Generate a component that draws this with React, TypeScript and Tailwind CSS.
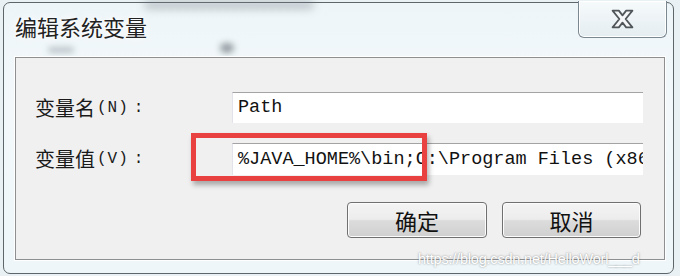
const CJK = "font-['Noto_Sans_CJK_SC','Noto_Sans',sans-serif]";
const MONO = "font-['Liberation_Mono','DejaVu_Sans_Mono',monospace]";

function CloseGlyph() {
  return (
    <svg width="23" height="20" viewBox="0 0 22 19">
      <polygon
        points="1.5,1.5 7.5,1.5 11,6 14.5,1.5 20.5,1.5 14,9.5 20.5,17.5 14.5,17.5 11,13 7.5,17.5 1.5,17.5 8,9.5"
        fill="#f4f6f7"
        stroke="#50555a"
        strokeWidth="1.7"
        strokeLinejoin="round"
      />
    </svg>
  );
}

function Label({ text, key_ }: { text: string; key_: string }) {
  return (
    <div className={`flex w-[216px] shrink-0 items-center pl-[19px] text-[20px] text-[#1a1a1a] ${CJK}`}>
      <span>{text}</span>
      <span className={`ml-[2px] text-[16px] tracking-[1px] ${MONO}`}>({key_})</span>
      <span className={`ml-[5px] text-[16px] ${MONO}`}>:</span>
    </div>
  );
}

function Field({ value }: { value: string }) {
  return (
    <div
      className={`flex h-full w-[411px] shrink-0 items-center overflow-hidden whitespace-pre border-t border-l border-t-[#a3a3a3] border-l-[#e2e3ea] bg-white pl-[5px] text-[18.5px] text-[#111] ${MONO}`}
    >
      {value}
    </div>
  );
}

function WinButton({ label }: { label: string }) {
  return (
    <button
      type="button"
      className={`flex h-full w-full items-center justify-center rounded-[4px] border border-[#707070] bg-[linear-gradient(#f4f4f4_0%,#ececec_48%,#dcdcdc_52%,#d0d0d0_100%)] text-[22px] text-[#111] shadow-[inset_0_0_0_1px_#fcfcfc] ${CJK}`}
    >
      {label}
    </button>
  );
}

export default function App() {
  return (
    <div className="h-[276px] w-[680px] overflow-hidden bg-[#e9f1f4] pl-[3px] pt-[2px]">
      <div className="relative flex h-[272px] w-[671px] flex-col rounded-[7px] border border-[#5c666b] bg-[linear-gradient(180deg,#eef5f8_0%,#f3f9fb_40%,#eef6f9_100%)]">
        {/* blurred background behind the glass */}
        <div className="pointer-events-none absolute left-[140px] top-[-2px] h-[8px] w-[170px] rounded-full bg-[#6d7780] opacity-40 blur-[4px]" />
        <div className="pointer-events-none absolute left-[216px] top-[40px] h-[10px] w-[14px] rounded-full bg-[#3f4a52] opacity-50 blur-[3px]" />
        <div className="pointer-events-none absolute left-[44px] top-[44px] h-[6px] w-[26px] rounded-full bg-[#6a7580] opacity-40 blur-[3px]" />

        {/* Title bar */}
        <div className="flex h-[54px] shrink-0 items-start justify-between">
          <span
            className={`mt-[8px] pl-[11px] text-[22px] leading-[30px] text-[#222] [text-shadow:0_0_8px_#ffffff,0_0_3px_#ffffff] ${CJK}`}
          >
            编辑系统变量
          </span>
          <div className="mr-[6px] mt-[-2px] flex h-[37px] w-[89px] items-center justify-center rounded-b-[6px] border border-t-0 border-[#7b8890] bg-[linear-gradient(#f6fafb,#e4edf1)] shadow-[inset_0_0_0_1px_#ffffff]">
            <CloseGlyph />
          </div>
        </div>

        {/* Client area */}
        <div className="relative ml-[11px] h-[203px] w-[650px] border border-[#8d8f91] bg-[#f0f0f0] pt-[34px] shadow-[0_0_0_1px_#ffffff]">
          <div className="flex h-[31px] items-center">
            <Label text="变量名" key_="N" />
            <Field value="Path" />
          </div>

          <div className="relative mt-[20px] flex h-[32px] items-center">
            <Label text="变量值" key_="V" />
            <Field value="%JAVA_HOME%\bin;C:\Program Files (x86)\Common Files" />
            <div className="pointer-events-none absolute left-[175px] top-[-10px] h-[48px] w-[236px] border-[5px] border-[#e8413f] shadow-[2px_4px_5px_rgba(0,0,0,0.3)]" />
          </div>

          <div className="mt-[27px] flex h-[36px] justify-end gap-[15px] pr-[23px]">
            <div className="w-[140px]">
              <WinButton label="确定" />
            </div>
            <div className="w-[139px]">
              <WinButton label="取消" />
            </div>
          </div>
        </div>

        {/* watermark */}
        <div className="pointer-events-none absolute left-[414px] top-[246px] font-['Liberation_Sans',Arial,sans-serif] text-[14.5px] tracking-[-0.2px] text-white [text-shadow:0_0_2px_rgba(80,80,80,0.7)]">
          https://blog.csdn.net/HelloWorl___d
        </div>
      </div>
    </div>
  );
}
